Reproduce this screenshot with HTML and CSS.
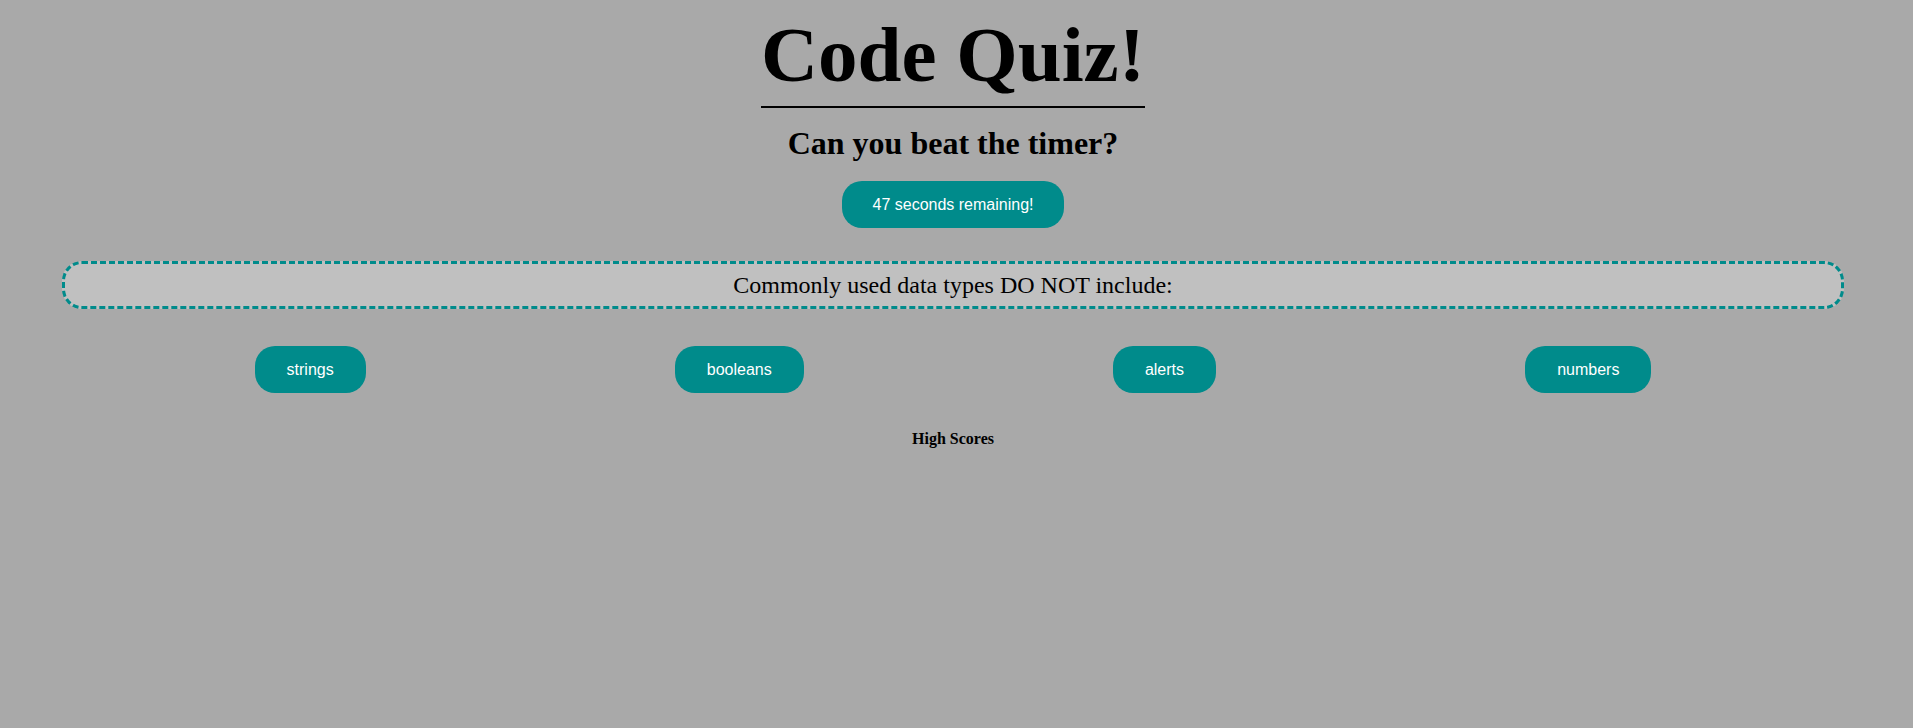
FILE: index.html
```html
<!DOCTYPE html>
<html lang="en">
<head>
<meta charset="utf-8">
<title>Code Quiz!</title>
<link rel="stylesheet" href="styles.css">
</head>
<body>
<div class="page">
  <header class="header">
    <h1 class="title">Code Quiz!</h1>
    <h2 class="subtitle">Can you beat the timer?</h2>
    <button class="btn timer">47 seconds remaining!</button>
  </header>
  <main class="quiz">
    <div class="question">Commonly used data types DO NOT include:</div>
    <div class="answers">
      <button class="btn answer">strings</button>
      <button class="btn answer">booleans</button>
      <button class="btn answer">alerts</button>
      <button class="btn answer">numbers</button>
    </div>
  </main>
  <h4 class="scores">High Scores</h4>
</div>
</body>
</html>
```

FILE: styles.css
```css
html, body {
  margin: 0;
  padding: 0;
  background: #a9a9a9;
}
body {
  font-family: "Liberation Serif", "Times New Roman", serif;
  color: #000;
}
.page {
  padding: 0 15px 0 8px;
  display: flex;
  flex-direction: column;
  align-items: stretch;
}
.header {
  display: flex;
  flex-direction: column;
  align-items: center;
}
.title {
  margin: 15px 0 0;
  font-size: 79px;
  font-weight: bold;
  line-height: 79px;
  padding-bottom: 12px;
  border-bottom: 2px solid #000;
}
.subtitle {
  margin: 17px 0 0;
  font-size: 32px;
  font-weight: bold;
  line-height: 37px;
}
.btn {
  font-family: "Liberation Sans", Arial, sans-serif;
  font-size: 16px;
  color: #fff;
  background: #008b8b;
  border: none;
  height: 47px;
  border-radius: 20px;
  padding: 0 32px;
  cursor: pointer;
}
.timer {
  margin-top: 19px;
  padding: 0 31px;
}
.quiz {
  display: flex;
  flex-direction: column;
}
.question {
  margin: 33px 54px 0;
  height: 42px;
  line-height: 42px;
  border: 3px dashed #008b8b;
  border-radius: 20px;
  background: #c0c0c0;
  text-align: center;
  font-size: 24px;
}
.answers {
  margin: 37px 92px 0 92px;
  display: flex;
  justify-content: space-around;
}
.scores {
  margin: 37px 0 0;
  text-align: center;
  font-size: 16px;
  font-weight: bold;
  line-height: 18px;
}
```
